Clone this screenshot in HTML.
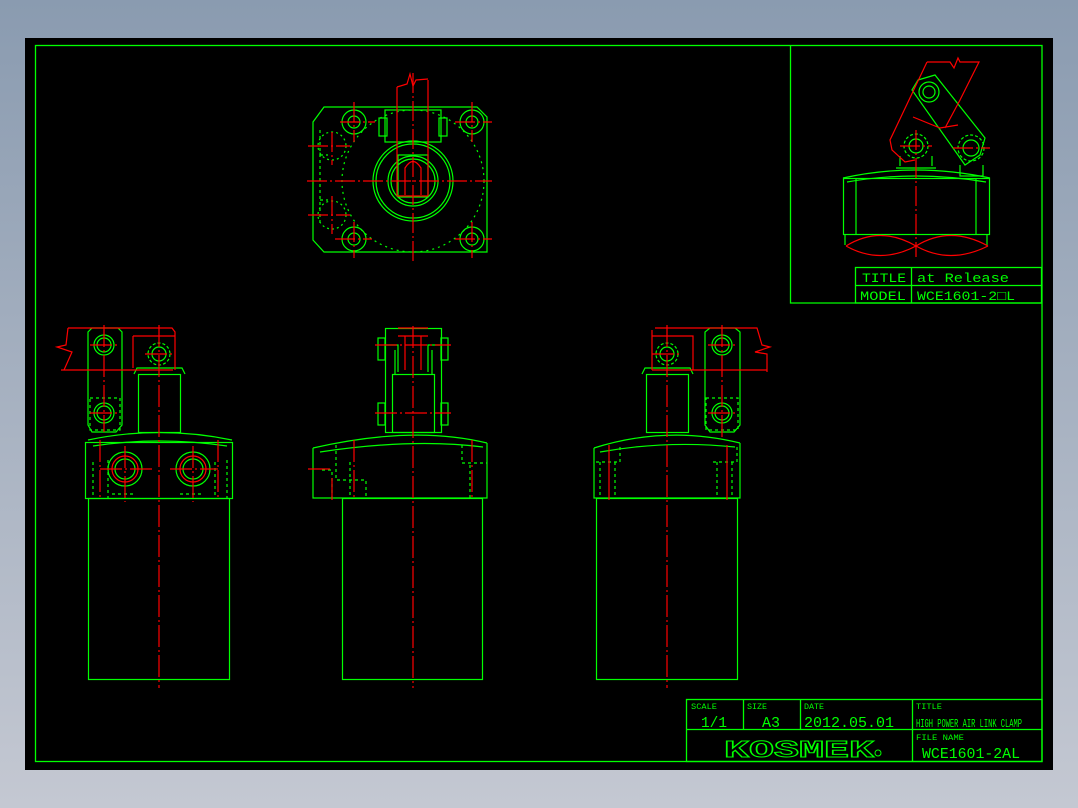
<!DOCTYPE html>
<html><head><meta charset="utf-8"><style>
html,body{margin:0;padding:0;width:1078px;height:808px;overflow:hidden;background:linear-gradient(#8a9bb0,#c4c8d2);}
svg{display:block}
text{font-family:"Liberation Mono",monospace;fill:#00ff00;}
</style></head><body>
<svg width="1078" height="808" viewBox="0 0 1078 808" xmlns="http://www.w3.org/2000/svg">
<rect x="25" y="38" width="1028" height="732" fill="#000"/>
<g fill="none" stroke="#00ff00" stroke-width="1.3">
<rect x="35.5" y="45.5" width="1006.5" height="716"/>
<path d="M790.5 45.5V303H1042"/>
<rect x="855.5" y="267.5" width="186" height="35.5"/>
<path d="M855.5 285.5H1042M911.5 267.5V303"/>
<rect x="686.5" y="699.5" width="355.5" height="62"/>
<path d="M686.5 729.5H1042M743.5 699.5V729.5M800.5 699.5V729.5M912.5 699.5V762"/>
</g>

<!-- TOP VIEW -->
<g fill="none" stroke="#00ff00" stroke-width="1.2">
<path d="M324 107H477L487 117V252H324L313 240V122Z"/>
<circle cx="354" cy="122" r="12"/><circle cx="354" cy="122" r="6"/>
<circle cx="472" cy="122" r="12"/><circle cx="472" cy="122" r="6"/>
<circle cx="354" cy="239" r="12"/><circle cx="354" cy="239" r="6"/>
<circle cx="472" cy="239" r="12"/><circle cx="472" cy="239" r="6"/>
<circle cx="413" cy="181" r="40"/><circle cx="413" cy="181" r="37"/>
<circle cx="413" cy="181" r="25"/><circle cx="413" cy="181" r="22"/>
<circle cx="413" cy="181" r="71" stroke-dasharray="2 4"/>
<rect x="385" y="110" width="56" height="32"/>
<rect x="379" y="118" width="8" height="18"/><rect x="439" y="118" width="8" height="18"/>
<rect x="398" y="155" width="30" height="42"/>
<path d="M320 130V225M320 155h8M320 200h8" stroke-dasharray="3 3"/>
<circle cx="332" cy="146" r="14" stroke-dasharray="2 3"/><circle cx="332" cy="215" r="14" stroke-dasharray="2 3"/>
</g>
<g fill="none" stroke="#ff0000" stroke-width="1.2">
<path d="M307 181H492M413 73V262M354 102V142M340 122H375M472 102V142M455 122H492M354 222V258M335 239H372M472 222V258M455 239H492M308 146H350M332 132V165M308 215H350M332 196V234" stroke-dasharray="20 3 2 3"/>
<path d="M397 87V196M428 80V196M397 196H428M397 87L407 84L410 74L413 86L416 80L428 79"/>
<path d="M405 195V168Q413 155 421 168V195"/>
</g>

<!-- LEFT VIEW -->
<g fill="none" stroke="#00ff00" stroke-width="1.2">
<rect x="88.5" y="498.5" width="141" height="181"/>
<rect x="85.5" y="442.5" width="147" height="56"/>
<path d="M88 440Q159 425 232 440"/>
<path d="M93 446Q159 436 227 446"/>
<rect x="138.5" y="374.5" width="42" height="58"/>
<path d="M134 374l3-6h45l3 6"/>
<path d="M92 328H118L122 332V425L116 432H92L88 425V332Z"/>
<circle cx="104" cy="345" r="10"/><circle cx="104" cy="345" r="7"/>
<circle cx="104" cy="413" r="10"/><circle cx="104" cy="413" r="7"/>
<circle cx="159" cy="354" r="11" stroke-dasharray="3 2"/><circle cx="159" cy="354" r="7"/>
<circle cx="125" cy="469" r="17"/><circle cx="125" cy="469" r="10"/>
<circle cx="193" cy="469" r="17"/><circle cx="193" cy="469" r="10"/>
<path d="M93 462V498M108 460V498M215 462V498M227 460V498M112 494h24M180 494h24" stroke-dasharray="3 3"/>
<rect x="90" y="398" width="30" height="32" stroke-dasharray="3 3"/>
</g>
<g fill="none" stroke="#ff0000" stroke-width="1.2">
<circle cx="125" cy="469" r="13"/><circle cx="193" cy="469" r="13"/>
<path d="M159 325V688M104 325V432M90 345H120M90 413H120M145 354H175M100 469H152M170 469H218M125 446V502M193 446V502M100 440V500M218 440V500" stroke-dasharray="22 3 2 3"/>
<path d="M68 328H172L175 332V370M133 336H175M61 370H173M68 328L66 345L57 347L72 352L64 370M133 336V368"/>
</g>

<!-- CENTER VIEW -->
<g fill="none" stroke="#00ff00" stroke-width="1.2">
<rect x="342.5" y="498.5" width="140" height="181"/>
<path d="M313 448V498H487V443M313 448Q413 425 487 443"/>
<path d="M320 452Q413 438 483 447"/>
<rect x="392.5" y="374.5" width="42" height="58"/>
<rect x="385.5" y="328.5" width="56" height="104"/>
<path d="M385 345H398V372M441 345H428V372M395 350v25M432 350v25"/>
<rect x="378" y="338" width="7" height="22"/><rect x="441" y="338" width="7" height="22"/>
<rect x="378" y="403" width="7" height="22"/><rect x="441" y="403" width="7" height="22"/>
<path d="M336 445V480h30v18M350 462v36M462 445v18h25M470 465v33M322 470h10v30" stroke-dasharray="3 3"/>
</g>
<g fill="none" stroke="#ff0000" stroke-width="1.2">
<path d="M413 326V688M375 345H451M375 413H451M354 440V500M472 440V500M308 469H333M332 478V500" stroke-dasharray="22 3 2 3"/>
<path d="M398 328H428M405 336V370M421 336V370M398 336H428"/>
</g>

<!-- RIGHT VIEW -->
<g fill="none" stroke="#00ff00" stroke-width="1.2">
<rect x="596.5" y="498.5" width="141" height="181"/>
<path d="M594 448V498H740V443M594 448Q667 425 740 443"/>
<path d="M600 452Q667 440 735 447"/>
<rect x="646.5" y="374.5" width="42" height="58"/>
<path d="M642 374l3-6h45l3 6"/>
<path d="M710 328H735L740 332V425L734 432H710L705 425V332Z"/>
<circle cx="722" cy="345" r="10"/><circle cx="722" cy="345" r="7"/>
<circle cx="722" cy="413" r="10"/><circle cx="722" cy="413" r="7"/>
<circle cx="667" cy="354" r="11" stroke-dasharray="3 2"/><circle cx="667" cy="354" r="7"/>
<rect x="706" y="398" width="32" height="32" stroke-dasharray="3 3"/>
<path d="M596 462h24V445M600 462V498M615 462V498M713 462h24V445M717 462V498M732 462V498" stroke-dasharray="3 3"/>
</g>
<g fill="none" stroke="#ff0000" stroke-width="1.2">
<path d="M667 325V688M722 325V440M652 354H682M708 345H738M708 413H738" stroke-dasharray="22 3 2 3"/>
<path d="M609 445V500M727 445V500"/>
<path d="M655 328H757L762 345L770 347L755 352L767 354V372M652 330V370M652 336H693V370M652 370H767"/>
</g>

<!-- INSET DRAWING -->
<g fill="none" stroke="#00ff00" stroke-width="1.2">
<rect x="843.5" y="178.5" width="146" height="56"/>
<path d="M856 178V234M976 178V234M843 178Q915 162 990 178M847 182Q915 170 986 182"/>
<path d="M845 235V245M987 235V245"/>
<path d="M918 80L935 75L985 138L980 155L965 165L912 90Z"/>
<circle cx="929" cy="92" r="10"/><circle cx="929" cy="92" r="6"/>
<circle cx="916" cy="146" r="12" stroke-dasharray="3 2"/><circle cx="916" cy="146" r="7"/>
<circle cx="971" cy="148" r="13" stroke-dasharray="3 2"/><circle cx="971" cy="148" r="8"/>
<path d="M900 166V156M932 166V156M896 168H936M960 165V176H983V165"/>
</g>
<g fill="none" stroke="#ff0000" stroke-width="1.2">
<path d="M916 130V257M900 146H932M953 148H990" stroke-dasharray="20 3 2 3"/>
<path d="M846 246Q880 225 916 246Q950 225 988 246M846 246Q880 265 916 246Q950 265 988 246"/>
<path d="M927 62H950L954 68L958 58L960 62H979L960 100L945 128M927 62L890 140L892 150L905 162L915 160M913 117L940 128L958 125"/>
</g>

<!-- text -->
<text x="862" y="282" font-size="13" textLength="44" lengthAdjust="spacingAndGlyphs">TITLE</text>
<text x="917" y="282" font-size="13" textLength="92" lengthAdjust="spacingAndGlyphs">at Release</text>
<text x="860" y="300" font-size="13" textLength="46" lengthAdjust="spacingAndGlyphs">MODEL</text>
<text x="917" y="300" font-size="13" textLength="98" lengthAdjust="spacingAndGlyphs">WCE1601-2□L</text>
<text x="691" y="709" font-size="8" textLength="26" lengthAdjust="spacingAndGlyphs">SCALE</text>
<text x="747" y="709" font-size="8" textLength="20" lengthAdjust="spacingAndGlyphs">SIZE</text>
<text x="804" y="709" font-size="8" textLength="20" lengthAdjust="spacingAndGlyphs">DATE</text>
<text x="916" y="709" font-size="8" textLength="26" lengthAdjust="spacingAndGlyphs">TITLE</text>
<text x="701" y="727" font-size="15" textLength="26" lengthAdjust="spacingAndGlyphs">1/1</text>
<text x="762" y="727" font-size="15" textLength="18" lengthAdjust="spacingAndGlyphs">A3</text>
<text x="804" y="727" font-size="15" textLength="90" lengthAdjust="spacingAndGlyphs">2012.05.01</text>
<text x="916" y="727" font-size="12" textLength="106" lengthAdjust="spacingAndGlyphs">HIGH POWER AIR LINK CLAMP</text>
<text x="916" y="740" font-size="8" textLength="48" lengthAdjust="spacingAndGlyphs">FILE NAME</text>
<text x="922" y="758" font-size="15" textLength="98" lengthAdjust="spacingAndGlyphs">WCE1601-2AL</text>
<text x="724" y="757" font-size="24" font-weight="bold" style="fill:none;stroke:#00ff00;stroke-width:1" textLength="150" lengthAdjust="spacingAndGlyphs">KOSMEK</text>
<circle cx="878" cy="753" r="3" fill="none" stroke="#00ff00"/>
</svg>
</body></html>
